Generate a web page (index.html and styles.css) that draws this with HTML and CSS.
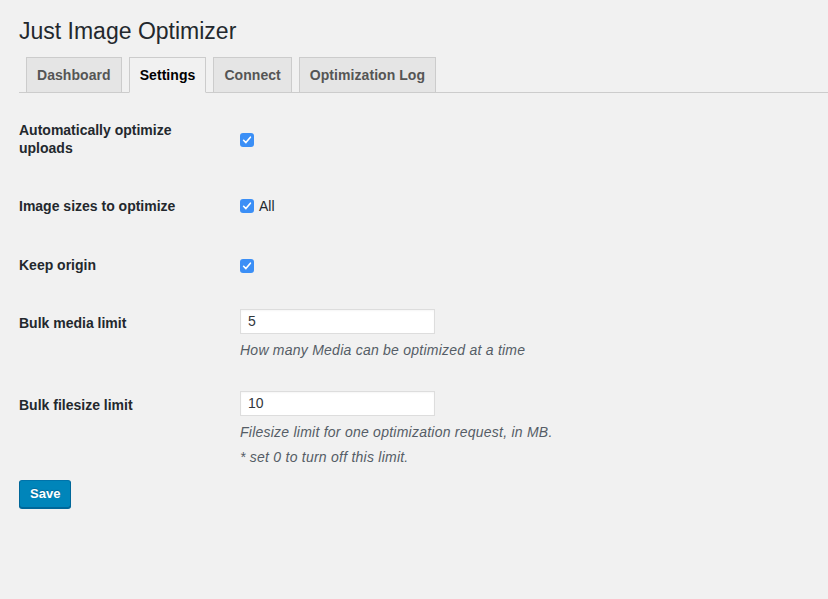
FILE: index.html
```html
<!DOCTYPE html>
<html>
<head>
<meta charset="utf-8">
<link rel="stylesheet" href="styles.css">
</head>
<body>
<div class="wrap">
  <h1 class="title">Just Image Optimizer</h1>
  <nav class="tabs">
    <a class="tab">Dashboard</a>
    <a class="tab active">Settings</a>
    <a class="tab">Connect</a>
    <a class="tab">Optimization Log</a>
  </nav>
  <form class="form">
    <div class="row">
      <div class="th">Automatically optimize uploads</div>
      <div class="td"><span class="cb"><svg viewBox="0 0 14 14" width="14" height="14"><path d="M3.6 7.3 L5.9 9.6 L10.4 4.2" fill="none" stroke="#fff" stroke-width="1.6" stroke-linecap="round" stroke-linejoin="round"/></svg></span></div>
    </div>
    <div class="row">
      <div class="th">Image sizes to optimize</div>
      <div class="td"><label class="cb-label"><span class="cb"><svg viewBox="0 0 14 14" width="14" height="14"><path d="M3.6 7.3 L5.9 9.6 L10.4 4.2" fill="none" stroke="#fff" stroke-width="1.6" stroke-linecap="round" stroke-linejoin="round"/></svg></span>All</label></div>
    </div>
    <div class="row">
      <div class="th">Keep origin</div>
      <div class="td"><span class="cb"><svg viewBox="0 0 14 14" width="14" height="14"><path d="M3.6 7.3 L5.9 9.6 L10.4 4.2" fill="none" stroke="#fff" stroke-width="1.6" stroke-linecap="round" stroke-linejoin="round"/></svg></span></div>
    </div>
    <div class="row">
      <div class="th">Bulk media limit</div>
      <div class="td">
        <input class="text" type="text" value="5">
        <p class="desc">How many Media can be optimized at a time</p>
      </div>
    </div>
    <div class="row">
      <div class="th">Bulk filesize limit</div>
      <div class="td">
        <input class="text" type="text" value="10">
        <p class="desc">Filesize limit for one optimization request, in MB.</p>
        <p class="desc">* set 0 to turn off this limit.</p>
      </div>
    </div>
    <p class="submit"><button type="button" class="btn">Save</button></p>
  </form>
</div>
</body>
</html>
```

FILE: styles.css
```css
html, body {
  margin: 0;
  padding: 0;
  background: #f1f1f1;
}
body {
  font-family: "Liberation Sans", Arial, sans-serif;
  font-size: 14px;
  color: #23282d;
  width: 828px;
  height: 599px;
  overflow: hidden;
}
.wrap {
  padding: 0 0 0 19px;
}
.title {
  margin: 0;
  padding: 16px 0 0;
  font-size: 23px;
  font-weight: 400;
  line-height: 30px;
  color: #23282d;
}
.tabs {
  display: flex;
  margin-top: 11px;
  border-bottom: 1px solid #ccc;
  height: 35px;
}
.tab {
  margin-left: 7px;
  padding: 5px 10px;
  font-size: 14px;
  line-height: 24px;
  font-weight: 700;
  color: #555;
  background: #e5e5e5;
  border: 1px solid #ccc;
  white-space: nowrap;
  height: 24px;
  letter-spacing: 0.06px;
}
.tab.active {
  background: #f1f1f1;
  color: #000;
  border-bottom-color: #f1f1f1;
}
.form {
  margin-top: 8px;
}
.row {
  display: grid;
  grid-template-columns: 210px 1fr;
}
.th {
  align-self: start;
  width: 200px;
  padding: 20px 10px 20px 0;
  font-weight: 700;
  line-height: 18.2px;
  color: #23282d;
}
.td {
  align-self: center;
  padding: 15px 10px 15px 11px;
  line-height: 18.2px;
}
.cb {
  display: inline-flex;
  width: 14px;
  height: 14px;
  border-radius: 3px;
  background: #3b8ff6;
  vertical-align: middle;
}
.cb svg {
  display: block;
}
.cb-label {
  display: inline-flex;
  align-items: center;
  gap: 5px;
  color: #23282d;
  padding-top: 2px;
}
.text {
  display: block;
  box-sizing: border-box;
  width: 195px;
  height: 25px;
  margin: 0;
  padding: 2px 7px;
  border: 1px solid #ddd;
  background: #fff;
  font-family: "Liberation Sans", Arial, sans-serif;
  font-size: 14px;
  color: #32373c;
  box-shadow: inset 0 1px 2px rgba(0,0,0,0.04);
  outline: none;
}
.desc {
  margin: 6px 0 0;
  font-style: italic;
  font-size: 14px;
  line-height: 21px;
  letter-spacing: 0.24px;
  color: #555d66;
}
.desc + .desc {
  margin-top: 4px;
}
.submit {
  margin: -3px 0 0;
  padding: 0;
}
.btn {
  height: 28px;
  padding: 0 10px 1px;
  font-family: "Liberation Sans", Arial, sans-serif;
  font-size: 13px;
  font-weight: 700;
  color: #fff;
  background: #0085ba;
  border: 1px solid;
  border-color: #0073aa #006799 #006799;
  border-radius: 3px;
  box-shadow: 0 1px 0 #006799;
  text-shadow: 0 -1px 1px #006799;
  cursor: pointer;
}
```
